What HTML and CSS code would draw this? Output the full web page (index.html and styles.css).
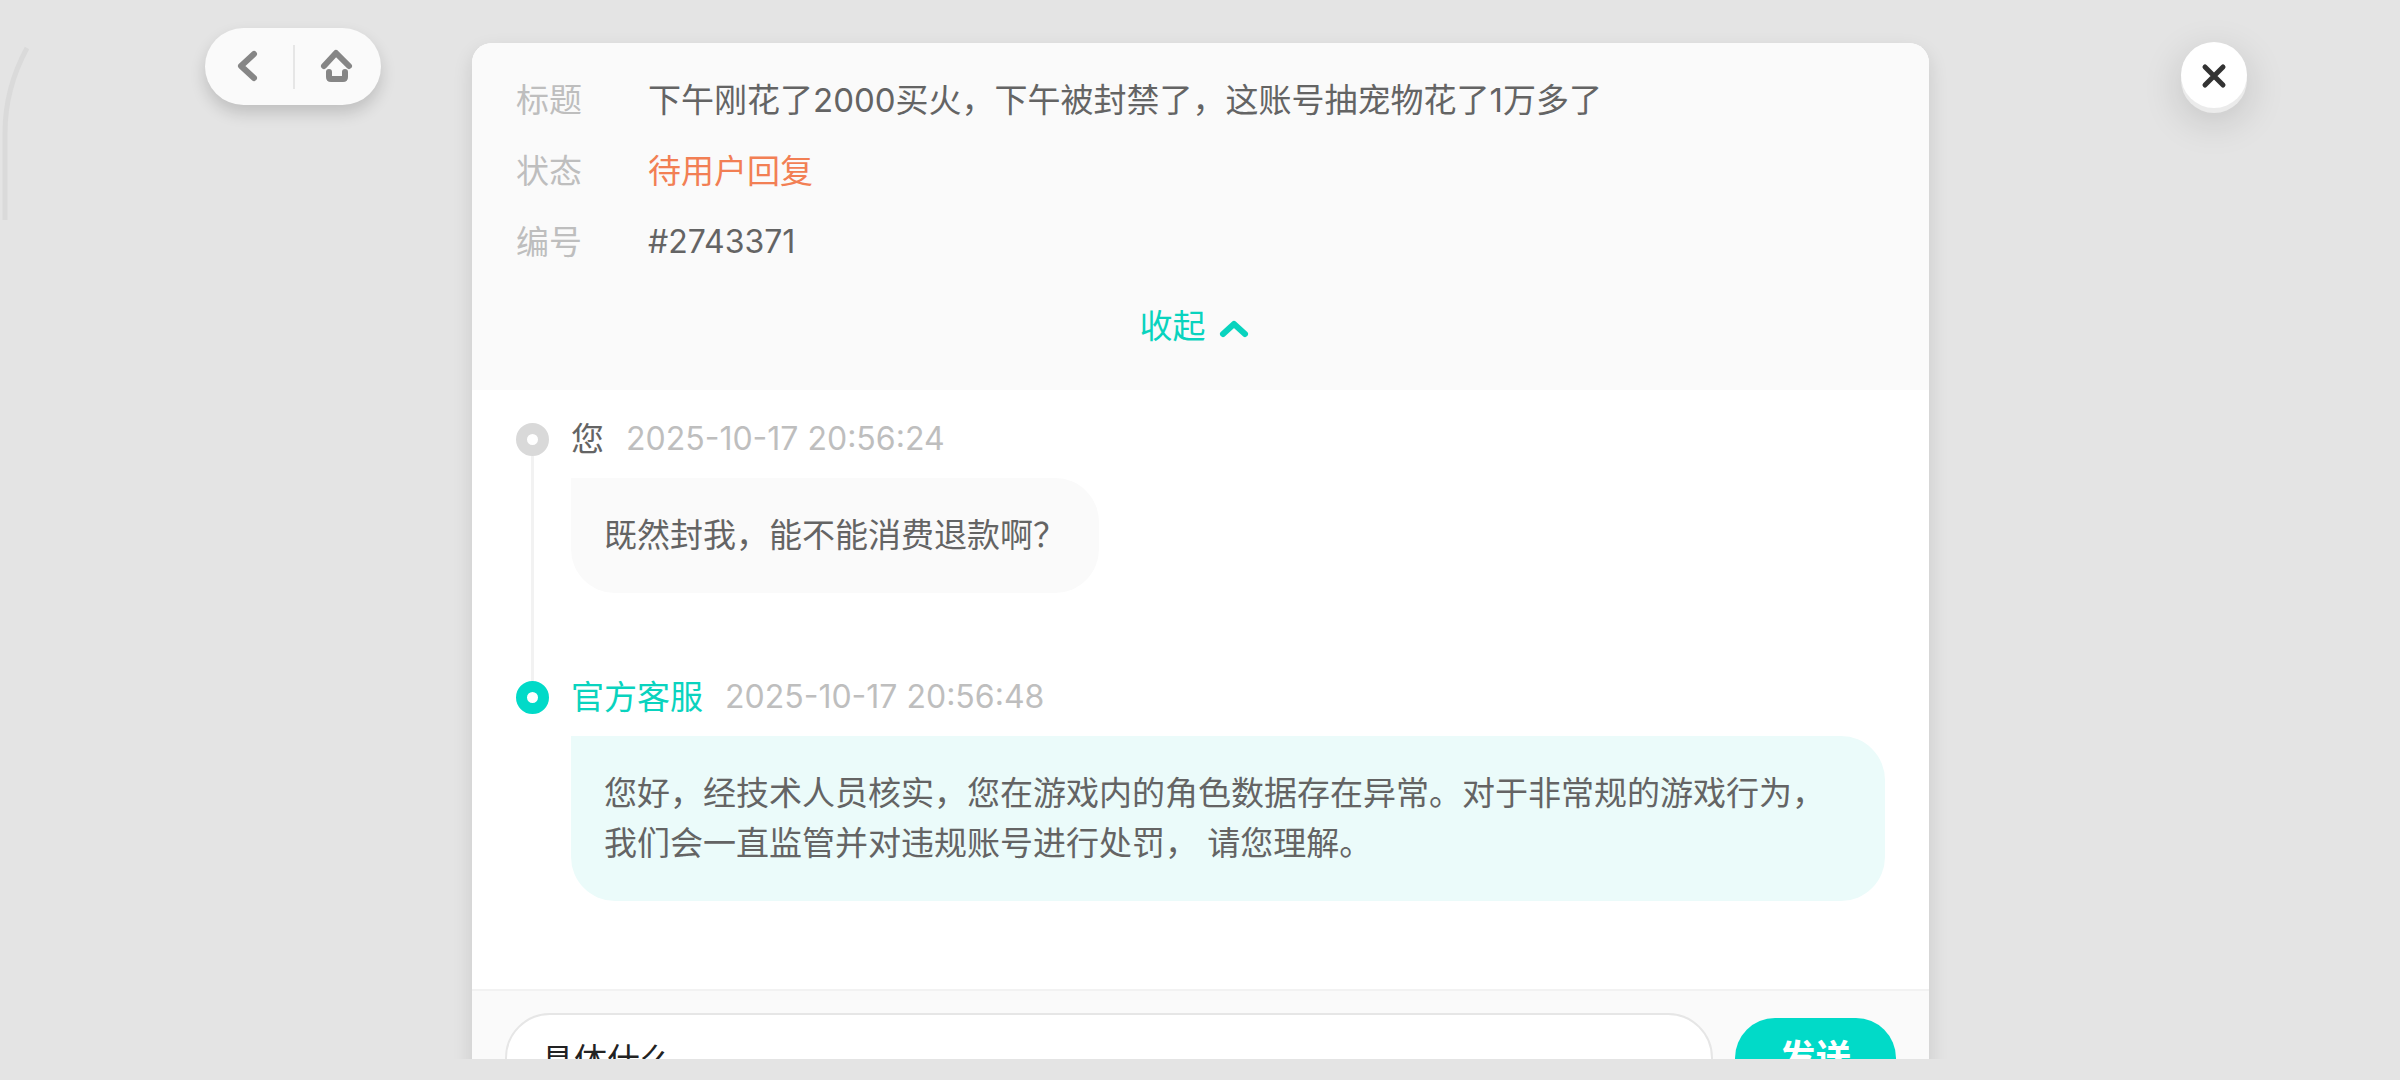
FILE: index.html
```html
<!DOCTYPE html>
<html lang="zh-CN">
<head>
<meta charset="utf-8">
<meta name="viewport" content="width=device-width, initial-scale=1">
<title>工单详情</title>
<link rel="stylesheet" href="styles.css">
</head>
<body>
<svg class="edge-mark" width="32" height="184" viewBox="0 0 32 184" fill="none" stroke="#dadada" stroke-width="5" aria-hidden="true"><path d="M27 8C14 32 5 58 5 93V180"/></svg>
<div class="screen">
  <div class="side side-left">
    <nav class="nav-pill">
      <button class="nav-button" type="button" aria-label="返回">
        <svg width="44" height="44" viewBox="0 0 44 44" fill="none" stroke="#868686" stroke-width="6" stroke-linecap="round" stroke-linejoin="round"><path d="M27 9L14 21L27 33"/></svg>
      </button>
      <button class="nav-button" type="button" aria-label="首页">
        <svg width="44" height="44" viewBox="0 0 44 44" fill="none" stroke="#868686" stroke-width="6" stroke-linecap="round" stroke-linejoin="round"><path d="M8 21L20 8L33 21M13 27V32Q13 34 15 34H27Q29 34 29 32V27"/></svg>
      </button>
    </nav>
  </div>

  <main class="panel">
    <header class="summary">
      <dl class="fields">
        <div class="field"><dt>标题</dt><dd>下午刚花了2000买火，下午被封禁了，这账号抽宠物花了1万多了</dd></div>
        <div class="field"><dt>状态</dt><dd class="pending">待用户回复</dd></div>
        <div class="field"><dt>编号</dt><dd class="number">#2743371</dd></div>
      </dl>
      <button class="toggle" type="button">收起
        <svg width="44" height="44" viewBox="0 0 44 44" fill="none" stroke="#09d3be" stroke-width="6" stroke-linecap="round" stroke-linejoin="round"><path d="M11 30L22 20L33 30"/></svg>
      </button>
    </header>

    <ol class="thread">
      <li class="entry">
        <div class="rail"><span class="dot"></span><span class="line"></span></div>
        <article class="message">
          <div class="meta"><span class="author">您</span><time>2025-10-17 20:56:24</time></div>
          <p class="bubble">既然封我，能不能消费退款啊？</p>
        </article>
      </li>
      <li class="entry official">
        <div class="rail"><span class="dot"></span></div>
        <article class="message">
          <div class="meta"><span class="author">官方客服</span><time>2025-10-17 20:56:48</time></div>
          <p class="bubble">您好，经技术人员核实，您在游戏内的角色数据存在异常。对于非常规的游戏行为，我们会一直监管并对违规账号进行处罚， 请您理解。</p>
        </article>
      </li>
    </ol>

    <form class="reply">
      <input class="reply-input" type="text" aria-label="回复内容" value="具体什么">
      <button class="send" type="button">发送</button>
    </form>
  </main>

  <div class="side side-right">
    <button class="close" type="button" aria-label="关闭">
      <svg width="32" height="32" viewBox="0 0 32 32" fill="none" stroke="#333" stroke-width="5" stroke-linecap="round"><path d="M7 8L25 26M25 8L7 26"/></svg>
    </button>
  </div>
</div>
</body>
</html>
```
FILE: styles.css
```css
* { box-sizing: border-box; }

body {
  margin: 0;
  height: 100vh;
  padding-bottom: 21px;
  overflow: hidden;
  background: #e4e4e4;
  color: #646464;
  font: 33px/50px Inter, "Noto Sans CJK SC", sans-serif;
}

button, input { font: inherit; color: inherit; border: 0; padding: 0; margin: 0; }
button { background: none; cursor: pointer; }
svg { display: block; flex: none; }
dl, dd, ol, p { margin: 0; padding: 0; }

.edge-mark { position: absolute; left: 0; top: 40px; }

/* The dialog runs past the bottom of the screen and is cut off there */
.screen {
  height: 100%;
  overflow: hidden;
  display: grid;
  grid-template-columns: 472px minmax(0, 1fr) 471px;
  align-items: start;
}

.side { display: flex; }
.side-left { padding: 28px 0 0 205px; }
.side-right { justify-content: flex-end; padding: 42px 153px 0 0; }

.nav-pill {
  display: flex;
  align-items: center;
  height: 77px;
  border-radius: 39px;
  background: #fafafa;
  box-shadow: 0 8px 16px rgba(0, 0, 0, .16);
}
.nav-button { width: 88px; height: 44px; display: flex; align-items: center; justify-content: center; }
.nav-button + .nav-button { border-left: 2px solid #e6e6e6; }

.close {
  width: 66px;
  height: 66px;
  border-radius: 50%;
  display: flex;
  align-items: center;
  justify-content: center;
  background: #fff;
  box-shadow: 0 5px 0 #ebebeb, 0 12px 40px rgba(0, 0, 0, .16);
}

.panel {
  margin-top: 43px;
  border-radius: 20px;
  background: #fff;
  box-shadow: 0 8px 20px rgba(0, 0, 0, .12);
}

.summary {
  display: flex;
  flex-direction: column;
  align-items: center;
  gap: 34px;
  padding: 32px 44px 39px;
  border-radius: 20px 20px 0 0;
  background: #fafafa;
}
.fields { width: 100%; display: flex; flex-direction: column; gap: 21px; }
.field { display: flex; }
.field dt { flex: none; width: 132px; color: #bebebe; }
.field .pending { color: #f27f54; }
.field .number { font-size: 32px; }

.toggle { display: flex; align-items: center; gap: 6px; height: 50px; padding-right: 6px; color: #09d3be; }

.thread { list-style: none; padding: 24px 44px 9px; }
.entry { display: flex; gap: 22px; }
.rail { flex: none; width: 33px; padding-top: 9px; display: flex; flex-direction: column; align-items: center; }
.dot { flex: none; width: 33px; height: 33px; border: 11px solid #d9d9d9; border-radius: 50%; background: #fff; }
.line { flex: 1; width: 3px; margin-bottom: -9px; background: #f2f2f2; }
.message { min-width: 0; padding-bottom: 79px; display: flex; flex-direction: column; align-items: flex-start; gap: 14px; }
.meta { display: flex; gap: 22px; }
.meta time { color: #bebebe; font-size: 32px; }
.bubble { padding: 32px 33px 33px; border-radius: 0 44px 44px 44px; background: #fafafa; }

.official .dot { border-color: #01dac8; }
.official .author { color: #09d3be; }
.official .bubble { background: #ebfbfa; }

.reply {
  display: flex;
  align-items: center;
  gap: 22px;
  padding: 22px 33px;
  border-top: 2px solid #f2f2f2;
  background: #fafafa;
}
.reply-input {
  flex: 1;
  min-width: 0;
  height: 90px;
  padding: 0 34px;
  border: 2px solid #e6e6e6;
  border-radius: 45px;
  background: #fff;
  color: #222;
}
.send { width: 161px; height: 80px; border-radius: 40px; background: #01dac8; color: #fff; font-size: 36px; font-weight: 700; }
```
